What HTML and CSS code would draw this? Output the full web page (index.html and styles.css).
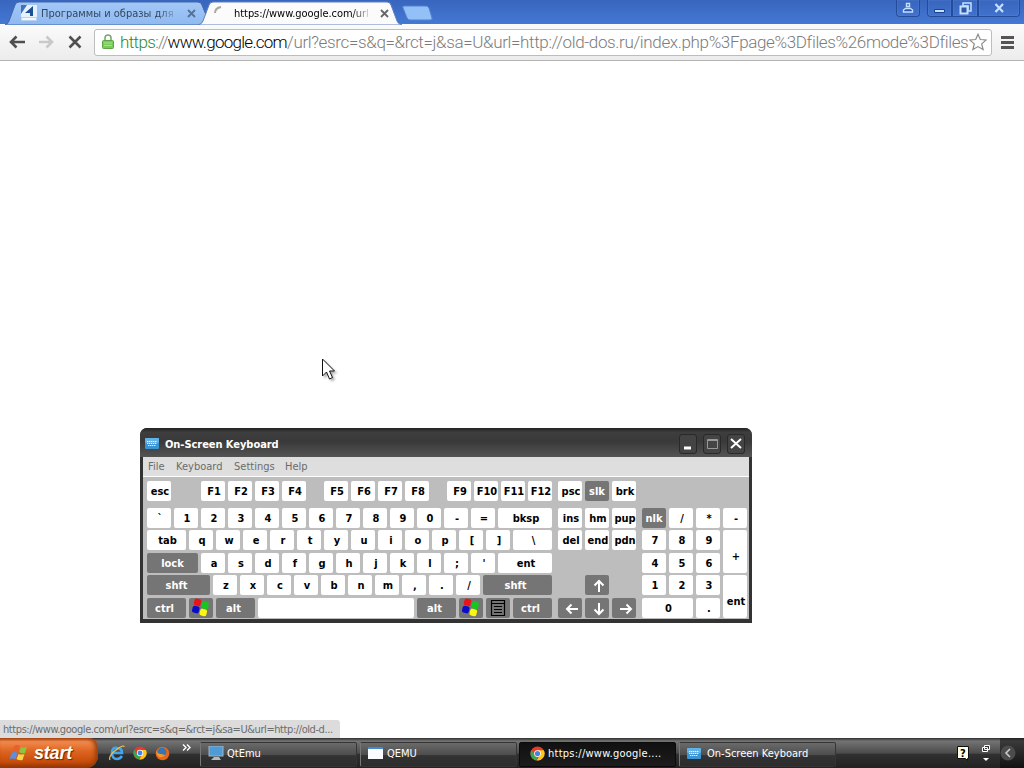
FILE: index.html
```html
<!DOCTYPE html>
<html lang="en">
<head>
  <meta charset="UTF-8">
  <title>Desktop</title>
  <link rel="stylesheet" href="styles.css">
</head>
<body>
  <svg class="defs">
    <symbol id="flag" viewBox="0 0 20 20">
      <g transform="translate(-1 -1) rotate(14 10 10)">
        <rect x="3" y="2.500" width="7" height="7" rx="2" fill="#e8141c"/>
        <rect x="11" y="3.500" width="7" height="7" rx="2" fill="#14c81e"/>
        <rect x="3" y="10" width="7" height="7" rx="2" fill="#0c0cc8"/>
        <rect x="11" y="11" width="7" height="7" rx="2" fill="#f8f814"/>
      </g>
    </symbol>
    <symbol id="startflag" viewBox="0 0 20 20">
      <path fill="#e8602c" d="M5 3q3-2 6 0l-2 6q-3-1-6 0z"/>
      <path fill="#8cc63e" d="M12 4q3 1 6 0l-2 6q-3 1-6-1z"/>
      <path fill="#5b8fe0" d="M2.500 10q3-2 6 0l-2 6q-3-1-6 0z"/>
      <path fill="#f8d34c" d="M9.500 11q3 1 6 0l-2 6q-3 1-6-1z"/>
    </symbol>
    <symbol id="kbd" viewBox="0 0 14 11">
      <rect width="14" height="11" rx="1" fill="#3b94d4"/>
      <rect width="14" height="5" rx="1" fill="#61b2e6"/>
      <path d="M2 3.5h10M2 5.5h10M3 7.5h8" stroke="#e6f6ff" stroke-dasharray="1.4 .6"/>
    </symbol>
    <symbol id="chrome" viewBox="0 0 16 16">
      <circle cx="8" cy="8" r="7.5" fill="#e33b2e"/>
      <path fill="#36a852" d="M1.5 4.3 5 10l3 2-1.5 3.4A7.5 7.5 0 0 1 1.5 4.3z"/>
      <path fill="#fbc916" d="M8 4.5h6.7A7.5 7.5 0 0 1 7 15.4l4-6z"/>
      <circle cx="8" cy="8" r="3.6" fill="#fff"/>
      <circle cx="8" cy="8" r="2.8" fill="#4285e8"/>
    </symbol>
  </svg>

  <div class="tabstrip">
    <svg class="tab-shapes" width="440" height="25">
      <defs>
        <linearGradient id="tab" x2="0" y2="1"><stop stop-color="#a3c8f7"/><stop offset="1" stop-color="#8fb9f1"/></linearGradient>
      </defs>
      <path d="M5 25q3-1 4-4l6-16q1-3 4-3h179q3 0 4 3l8 20z" fill="url(#tab)" stroke="#4166a8"/>
      <path d="M198 25q4-1 5-4l6-16q1-3 4-3h174q3 0 4 3l6 16q1 3 5 4z" fill="#fbfbfb" stroke="#5d7fc0"/>
      <path d="M404 6h22q2 0 3 2l3 10q1 2-2 2h-20q-2 0-3-2l-4-10q-1-2 1-2z" fill="#93c0f7" stroke="#5381cf"/>
    </svg>
    <div class="tab tab-back">
      <svg width="16" height="16"><path d="M0 0h16v12H0z" fill="#e8f1fb"/><path d="M0 0h6L0 9z" fill="#3f73bb"/><path d="M12 1v10H9V8H4z" fill="#1d4f93"/><path d="M0 12h16v4H0z" fill="#b9d4f3"/><path d="M1 13h14v2H1z" fill="#f3f8fd"/></svg>
      <span class="tab-title">Программы и образы для</span>
      <svg class="x" width="9" height="9"><path d="M1 1l7 7M8 1L1 8"/></svg>
    </div>
    <div class="tab tab-front">
      <svg width="16" height="16"><path d="M2 8q0-5 6-6" fill="none" stroke="#a8a8a0" stroke-width="2"/></svg>
      <span class="tab-title">https://www.google.com/url</span>
      <svg class="x" width="9" height="9"><path d="M1 1l7 7M8 1L1 8"/></svg>
    </div>
    <div class="winbtns">
      <div class="wb user"><svg width="12" height="12"><path d="M4.500 1.500h3v3h-3zM1.500 10V8l2-1.500h5l2 1.500v2z" fill="#2c56a8" stroke="#c6e0ff" stroke-width="1.400"/></svg></div>
      <div class="wb min"><svg width="11" height="10"><path d="M.5 6.500h10v3H.5z" fill="#c6e0ff" stroke="#1c428e"/></svg></div>
      <div class="wb max"><svg width="13" height="13"><path d="M4 1h8v8H9V4H4z" fill="none" stroke="#c6e0ff" stroke-width="1.500"/><path d="M1.500 4.500h7v7h-7z" fill="#2c56a8" stroke="#c6e0ff" stroke-width="2"/></svg></div>
      <div class="wb cls"><svg width="11" height="10"><path d="M1.500 1l7.500 8M9 1L1.500 9" stroke="#c6e0ff" stroke-width="2.200"/></svg></div>
    </div>
  </div>

  <div class="toolbar">
    <svg class="nav-icons" width="76" height="18">
      <path d="M17 9H3M8.500 3.500L3 9l5.500 5.500" stroke="#4f4f4f"/>
      <path d="M31 9h13M38.500 3.500L44 9l-5.500 5.500" stroke="#c9c9c9"/>
      <path d="M61.500 3.500l11 11M72.500 3.500l-11 11" stroke="#4f4f4f"/>
    </svg>
    <div class="omnibox">
      <svg width="12" height="16"><path d="M3 7V4q0-3 3-3t3 3v3" fill="none" stroke="#7aa86e" stroke-width="1.600"/><rect x=".5" y="6.500" width="11" height="8" rx="1" fill="#79cb57" stroke="#5da545"/><path d="M2 9h8M2 11.500h8" stroke="#a9e28e"/></svg>
      <span class="url"><span class="secure">https</span><span class="sep">://</span><span class="host">www.google.com</span>/url?esrc=s&amp;q=&amp;rct=j&amp;sa=U&amp;url=http://old-dos.ru/index.php%3Fpage%3Dfiles%26mode%3Dfiles</span>
      <svg class="star" width="18" height="18"><path d="M9 1.200l2.300 5.300 5.900.5-4.500 3.900 1.400 5.700L9 13.600l-5.100 3 1.400-5.700L.8 7l5.900-.5z" fill="#fff" stroke="#8a8a8a" stroke-width="1.200"/></svg>
    </div>
    <div class="menu-btn"></div>
  </div>

  <div class="page"></div>
  <div class="status">https://www.google.com/url?esrc=s&amp;q=&amp;rct=j&amp;sa=U&amp;url=http://old-d...</div>

  <div class="osk">
    <div class="osk-title">
      <svg width="14" height="11"><use href="#kbd"/></svg>
      <span class="osk-name">On-Screen Keyboard</span>
      <div class="osk-btn"><svg width="17" height="17"><path d="M4 13h7" stroke="#fff" stroke-width="3"/></svg></div>
      <div class="osk-btn"><svg width="17" height="17"><path d="M3.500 4.500h10v9h-10zM3.500 5.500h10" fill="none" stroke="#999"/></svg></div>
      <div class="osk-btn"><svg width="17" height="17"><path d="M3 4l10 9M13 4L3 13" stroke="#fff" stroke-width="2"/></svg></div>
    </div>
    <div class="osk-menu"><span class="m1">File</span><span class="m2">Keyboard</span><span class="m3">Settings</span><span class="m4">Help</span></div>
    <div class="keys">
      <div class="main">
        <div class="row frow"><b>esc</b><i class="gap g1"></i><b>F1</b><b>F2</b><b>F3</b><b>F4</b><i class="gap"></i><b>F5</b><b>F6</b><b>F7</b><b>F8</b><i class="gap"></i><b>F9</b><b>F10</b><b>F11</b><b>F12</b></div>
        <div class="row"><b>`</b><b>1</b><b>2</b><b>3</b><b>4</b><b>5</b><b>6</b><b>7</b><b>8</b><b>9</b><b>0</b><b>-</b><b>=</b><b class="grow">bksp</b></div>
        <div class="row"><b class="w39">tab</b><b>q</b><b>w</b><b>e</b><b>r</b><b>t</b><b>y</b><b>u</b><b>i</b><b>o</b><b>p</b><b>[</b><b>]</b><b class="grow">\</b></div>
        <div class="row"><b class="w51 dark lock">lock</b><b>a</b><b>s</b><b>d</b><b>f</b><b>g</b><b>h</b><b>j</b><b>k</b><b>l</b><b>;</b><b>'</b><b class="grow">ent</b></div>
        <div class="row"><b class="w63 dark mod">shft</b><b>z</b><b>x</b><b>c</b><b>v</b><b>b</b><b>n</b><b>m</b><b>,</b><b>.</b><b>/</b><b class="grow dark mod">shft</b></div>
        <div class="row"><b class="w39 dark mod">ctrl</b><b class="dark"><svg width="20" height="20"><use href="#flag"/></svg></b><b class="w39 dark mod">alt</b><b class="grow"></b><b class="w39 dark mod">alt</b><b class="dark"><svg width="20" height="20"><use href="#flag"/></svg></b><b class="dark"><svg width="16" height="18"><path d="M1.500 1.500h13v15h-13zM1.500 4.500h13M4 7.500h8M4 10.500h8M4 13.500h8" fill="none" stroke="#000" stroke-width="1.200"/></svg></b><b class="w39 dark mod">ctrl</b></div>
      </div>
      <div class="pad navpad">
        <b>psc</b><b class="dark">slk</b><b>brk</b>
        <b>ins</b><b>hm</b><b>pup</b>
        <b>del</b><b>end</b><b>pdn</b>
        <b class="dark up"><svg width="14" height="14"><path d="M7 13V2M2.500 6.500L7 2l4.500 4.500"/></svg></b>
        <b class="dark left"><svg width="14" height="14"><path d="M13 7H2M6.500 2.500L2 7l4.500 4.500"/></svg></b>
        <b class="dark down"><svg width="14" height="14"><path d="M7 1v11M2.500 7.500L7 12l4.500-4.500"/></svg></b>
        <b class="dark right"><svg width="14" height="14"><path d="M1 7h11M7.500 2.500L12 7l-4.500 4.500"/></svg></b>
      </div>
      <div class="pad numpad">
        <b class="dark">nlk</b><b>/</b><b>*</b><b>-</b>
        <b>7</b><b>8</b><b>9</b><b class="tall">+</b>
        <b>4</b><b>5</b><b>6</b>
        <b>1</b><b>2</b><b>3</b><b class="tall">ent</b>
        <b class="wide">0</b><b>.</b>
      </div>
    </div>
  </div>

  <svg class="cursor" width="16" height="24"><path d="M1.500 1v17l4-4 3 7 3-1.500-3-6.500h5z" fill="#fff" stroke="#111"/></svg>

  <div class="taskbar">
    <div class="start"><svg width="20" height="20"><use href="#startflag"/></svg><span>start</span></div>
    <div class="quick">
      <svg width="16" height="16"><path d="M13 11q-2 3-5 3-5 0-5-6t5-5q5 0 5 5H4" fill="none" stroke="#42a5ee" stroke-width="2.600"/><path d="M1 15Q-1 11 7 5t8-3" fill="none" stroke="#f0c048" stroke-width="1.200"/></svg>
      <svg width="14" height="14"><use href="#chrome"/></svg>
      <svg width="15" height="15"><circle cx="7.500" cy="7.500" r="6.800" fill="#e4671b"/><circle cx="7" cy="6" r="4.300" fill="#3674b6"/><path d="M1 4q1 4 5 4l4 1q-2 3-6 2-3-2-3-7z" fill="#f59a22"/></svg>
      <svg class="more" width="9" height="7"><path d="M1 .5l3 3-3 3M5 .5l3 3-3 3"/></svg>
    </div>
    <div class="task t1"><svg width="16" height="15"><rect x="1" width="14" height="10" fill="#4f9bd6" stroke="#9fb4c4"/><path d="M6 11h5l2 3H3z" fill="#aebbc5"/></svg><span>QtEmu</span></div>
    <div class="task t2"><svg width="15" height="12"><path d="M0 0h15v12H0z" fill="#fafcff"/><path d="M0 0h15v2H0z" fill="#3f8ad0"/></svg><span>QEMU</span></div>
    <div class="task active"><svg width="15" height="15"><use href="#chrome"/></svg><span>https://www.google....</span></div>
    <div class="task t4"><svg width="14" height="11"><use href="#kbd"/></svg><span>On-Screen Keyboard</span></div>
    <div class="lang">
      <svg width="13" height="16"><path d="M.5 1.500h11v12h-1v2l-2-2h-8z" fill="#ffffe6" stroke="#111"/></svg><span class="q">?</span>
      <svg class="restore" width="10" height="18"><path d="M3.500 1.500h5v4h-5zM1.500 3.500h5v4h-5z" fill="#333" stroke="#fff"/><path d="M2 14h6l-3 3z" fill="#fff"/></svg>
    </div>
    <div class="tray"><svg width="16" height="16"><circle cx="8" cy="8" r="7.500" fill="#4c4c4c"/><path d="M10 4L6 8l4 4" fill="none" stroke="#ccc" stroke-width="1.600"/></svg></div>
  </div>
</body>
</html>
```
FILE: styles.css
```css
* {
  box-sizing: border-box;
}
body {
  margin: 0;
  width: 1024px;
  height: 768px;
  overflow: hidden;
  display: flex;
  flex-direction: column;
  background: #fff;
  font: 11px "DejaVu Sans Condensed", "DejaVu Sans", sans-serif;
  position: relative;
}
svg {
  flex: none;
  display: block;
}
.defs {
  position: absolute;
  width: 0;
  height: 0;
}
span {
  white-space: nowrap;
}

/* browser */
.tabstrip {
  height: 24px;
  flex: none;
  display: flex;
  position: relative;
  background: linear-gradient(#3865bd, #4478d4);
}
.tab-shapes {
  position: absolute;
  left: 0;
  top: 0;
}
.tab {
  position: relative;
  display: flex;
  align-items: center;
  height: 24px;
  padding-top: 2px;
}
.tab-back {
  width: 196px;
  padding-left: 21px;
  color: #33475f;
}
.tab-front {
  width: 200px;
  padding-left: 17px;
}
.tab-title {
  width: 134px;
  margin-left: 4px;
  mask-image: linear-gradient(90deg, #000 88%, rgba(0, 0, 0, 0.2));
}
.tab-front .tab-title {
  margin-left: 5px;
  letter-spacing: -0.05px;
}
.x {
  margin-left: 12px;
  stroke: #666;
  stroke-width: 1.8;
}
.tab-back .x {
  stroke: #54719a;
}
.winbtns {
  display: flex;
  margin-left: auto;
  padding-right: 4px;
}
.wb {
  height: 17px;
  border: 1px solid #254c98;
  border-top: 0;
  display: flex;
  align-items: center;
  justify-content: center;
  box-shadow: inset 0 0 1px #8db4f2;
}
.user {
  width: 24px;
  margin-right: 7px;
  border-radius: 0 0 4px 4px;
}
.min {
  width: 25px;
  border-radius: 0 0 0 4px;
}
.max {
  width: 26px;
}
.cls {
  width: 42px;
  border-radius: 0 0 4px 0;
}
.toolbar {
  height: 37px;
  flex: none;
  display: flex;
  align-items: center;
  padding-left: 8px;
  background: linear-gradient(#fbfbfb, #ececec);
  border-bottom: 1px solid #b4b4b4;
}
.nav-icons {
  fill: none;
  stroke-width: 2.6;
}
.omnibox {
  width: 898px;
  height: 27px;
  margin-left: 10px;
  padding-left: 7px;
  display: flex;
  align-items: center;
  background: #fff;
  border: 1px solid #bdbdbd;
  border-radius: 3px;
}
.url {
  width: 849px;
  margin-left: 6px;
  font: 300 17px Roboto, sans-serif;
  letter-spacing: -0.35px;
  color: #7c7c7c;
}
.secure {
  color: #2b8a2b;
  letter-spacing: -0.6px;
}
.sep {
  letter-spacing: -1px;
}
.host {
  color: #000;
  letter-spacing: -0.72px;
}
.menu-btn {
  width: 13px;
  height: 13px;
  margin-left: 9px;
  border-top: 3px solid #555;
  border-bottom: 3px solid #555;
  background: linear-gradient(transparent 2px, #555 2px, #555 5px, transparent 5px);
}
.page {
  flex: 1;
}
.status {
  width: 340px;
  height: 18px;
  flex: none;
  padding-left: 3px;
  line-height: 19px;
  letter-spacing: -0.42px;
  color: #6c6c6c;
  background: #dcdcdc;
  border-radius: 0 3px 0 0;
  white-space: nowrap;
}

/* on-screen keyboard */
.osk {
  position: absolute;
  left: 140px;
  top: 428px;
  width: 612px;
  height: 195px;
  padding: 0 3px 4px;
  background: #333;
  border-radius: 7px 7px 0 0;
}
.osk-title {
  height: 29px;
  margin: 0 -3px;
  padding: 2px 7px 0 5px;
  display: flex;
  align-items: center;
  gap: 6px;
  border-radius: 7px 7px 0 0;
  background: linear-gradient(#232323, #3e3e3e 15%, #393939 45%, #545454);
  color: #fff;
}
.osk-name {
  flex: 1;
  padding-top: 1px;
  font-weight: bold;
  letter-spacing: -0.05px;
}
.osk-btn {
  width: 18px;
  height: 20px;
  border: 1px solid #292929;
  border-radius: 3px;
  background: #444;
}
.osk-menu {
  height: 20px;
  display: flex;
  line-height: 19px;
  padding-left: 5px;
  color: #6b6b6b;
  background: #dedede;
  border-bottom: 1px solid #fff;
}
.m1 { width: 28px; }
.m2 { width: 58px; }
.m3 { width: 51px; }
.keys {
  height: 142px;
  display: flex;
  gap: 6px;
  padding: 4px 4px 0;
  background: #bdbdbd;
}
.main {
  width: 405px;
}
.row {
  display: flex;
  gap: 3px;
  margin-bottom: 2.4px;
}
.frow {
  margin-bottom: 7px;
}
.gap {
  width: 12px;
}
.g1 {
  width: 24px;
}
.keys b {
  width: 24px;
  height: 20px;
  flex: none;
  display: flex;
  align-items: center;
  justify-content: center;
  padding: 1px 0 0 2px;
  border-radius: 2px;
  background: #fff;
  color: #000;
  font-size: 11px;
}
.keys b.dark {
  padding-left: 0;
  background: #757575;
  color: #fff;
}
.keys b.mod {
  padding: 1px 4px 0 0;
}
.keys b.grow {
  flex: 1;
}
.keys b.w39 { width: 39px; }
.keys b.w51 { width: 51px; }
.keys b.w63 { width: 63px; }
.pad {
  display: grid;
  grid-template-rows: 27px 22.4px 22.4px 22.4px 22.4px 20px;
  column-gap: 3px;
  align-content: start;
}
.navpad {
  grid-template-columns: repeat(3, 24px);
}
.navpad svg {
  fill: none;
  stroke: #fff;
  stroke-width: 2;
}
.navpad .up { grid-area: 5 / 2; }
.navpad .left { grid-area: 6 / 1; }
.navpad .down { grid-area: 6 / 2; }
.navpad .right { grid-area: 6 / 3; }
.navpad .dark svg {
  margin: 1px 0 0 3px;
}
.numpad {
  grid-template-columns: repeat(4, 24px);
  grid-template-rows: 22.4px 22.4px 22.4px 22.4px 20px;
  padding-top: 27px;
}
.keys .tall {
  grid-row: span 2;
  height: 42.4px;
  padding-top: 10px;
}
.keys .wide {
  grid-column: span 2;
  width: 51px;
}

.cursor {
  position: absolute;
  left: 321px;
  top: 358px;
  filter: drop-shadow(2px 2px 1px rgba(0, 0, 0, 0.3));
}

/* taskbar */
.taskbar {
  height: 30px;
  flex: none;
  display: flex;
  align-items: center;
  color: #fff;
  background: linear-gradient(#2e2e2e, #737373 10%, #4c4c4c 50%, #303030 55%, #222);
}
.start {
  width: 98px;
  height: 30px;
  padding-left: 9px;
  display: flex;
  align-items: center;
  gap: 5px;
  background: linear-gradient(#b44a12, #f18a4c 12%, #dc6420 45%, #c64c0a 80%, #8e3405);
  border-radius: 0 9px 12px 0;
  box-shadow: inset -3px 0 4px #9a3d0c;
}
.start span {
  font: italic bold 18px "Liberation Sans", sans-serif;
  letter-spacing: -0.2px;
  text-shadow: 1px 1px 1px #6b2600;
}
.quick {
  width: 102px;
  padding-left: 11px;
  display: flex;
  align-items: center;
  gap: 8px;
}
.more {
  margin: -12px 0 0 4px;
  fill: none;
  stroke: #fff;
  stroke-width: 1.4;
}
.task {
  width: 157px;
  height: 25px;
  margin: 2px 3px 0 0;
  padding: 0 0 2px 7px;
  display: flex;
  align-items: center;
  gap: 4px;
  border: 1px solid #353535;
  border-left-color: #777;
  border-radius: 2px;
  background: linear-gradient(#6a6a6a, #4e4e4e 50%, #333 55%, #2c2c2c);
}
.t1 {
  gap: 3px;
}
.t4 {
  gap: 6px;
}
.active {
  margin-left: -1px;
  padding-left: 10px;
  gap: 3px;
  letter-spacing: 0.25px;
  background: linear-gradient(#111, #1c1c1c);
  border-color: #0a0a0a;
}
.lang {
  width: 43px;
  margin-left: auto;
  display: flex;
  align-items: center;
  gap: 11px;
  position: relative;
}
.q {
  position: absolute;
  left: 3px;
  top: 3px;
  color: #000;
  font-weight: bold;
}
.tray {
  width: 24px;
  height: 30px;
  display: flex;
  align-items: center;
  background: linear-gradient(#222, #3a3a3a 10%, #111);
}
```
